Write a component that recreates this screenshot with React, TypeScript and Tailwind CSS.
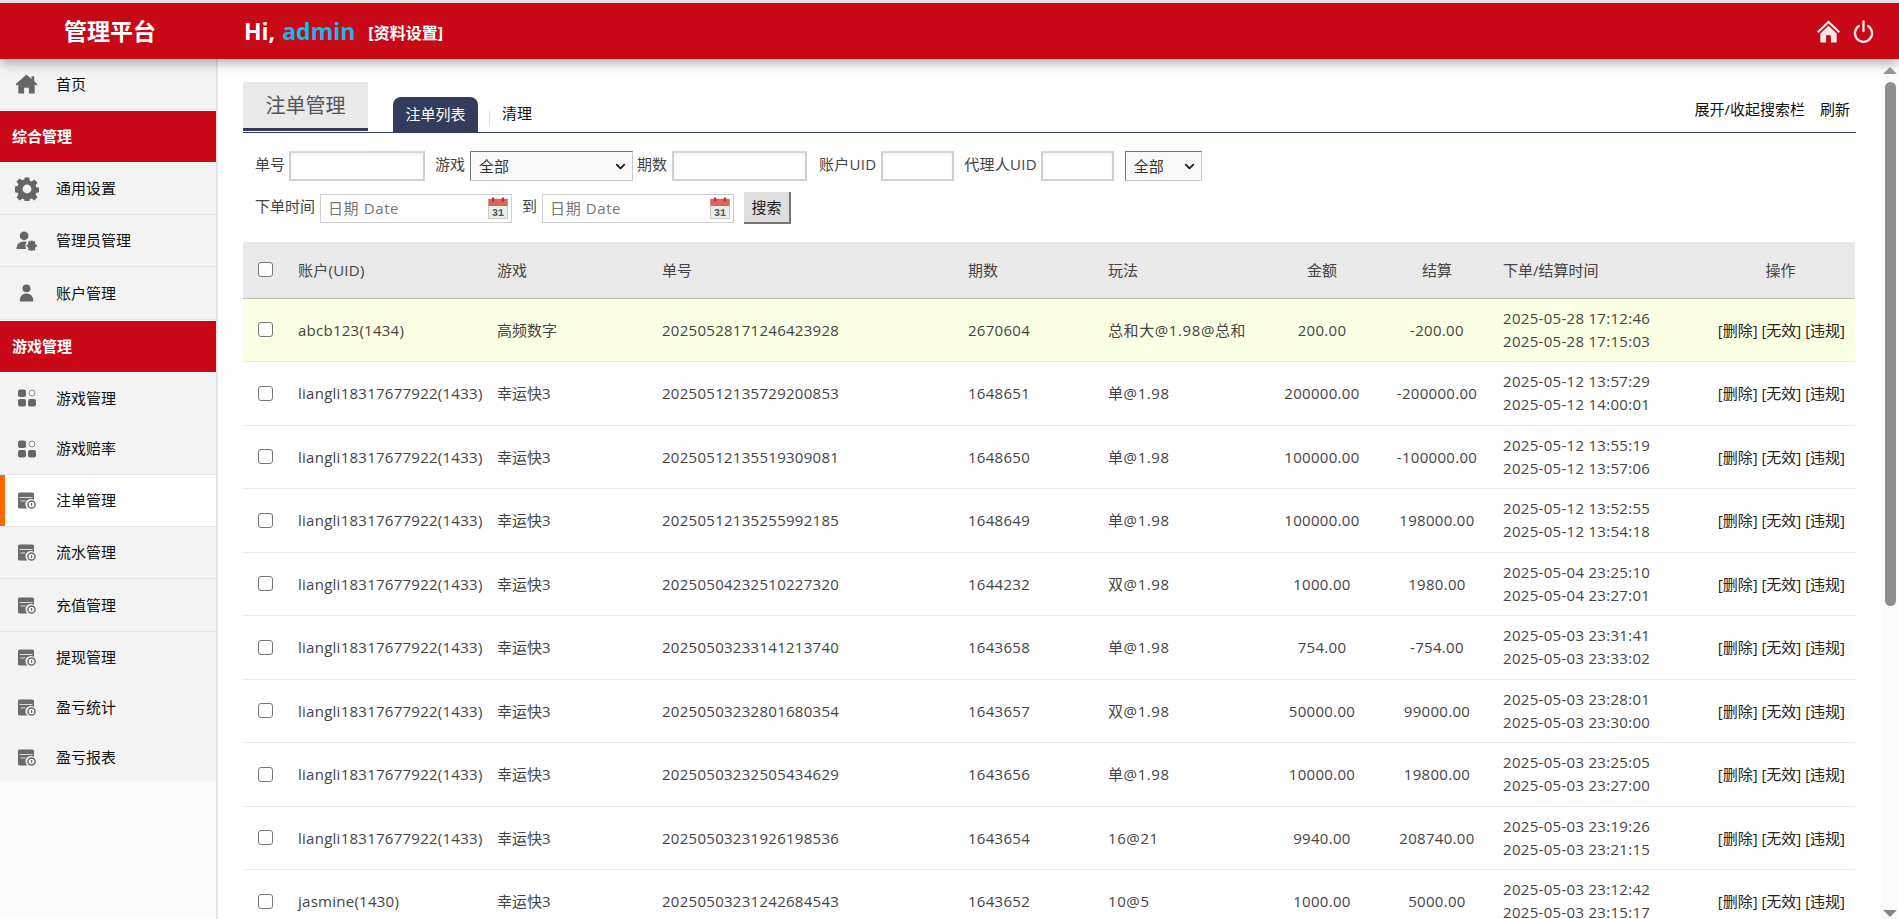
import React from 'react';
import { ChevronDown } from 'lucide-react';

const FONT = "font-['Open_Sans','Noto_Sans_CJK_SC',sans-serif]";

const HomeIcon = ({ className }: { className: string }) => (
  <svg viewBox="0 0 24 22" className={className} fill="currentColor">
    <path d="M12 0.5 L17.5 5.4 V2.5 H20.5 V8 L24 11.2 L22.6 12.8 L21 11.4 V21.5 H14.6 V15 H9.4 V21.5 H3 V11.4 L1.4 12.8 L0 11.2 Z" />
  </svg>
);

const HeaderHomeIcon = () => (
  <svg viewBox="0 0 24 24" className="w-[23px] h-[23px] text-[#fbe9e9]" fill="currentColor">
    <path d="M12 0.5 L24 12 L22.5 13.6 L12 3.6 L1.5 13.6 L0 12 Z" />
    <path d="M12 6 L20.5 14 V23.5 H14.5 V16 H9.5 V23.5 H3.5 V14 Z" />
  </svg>
);

const GearIcon = () => (
  <svg viewBox="0 0 24 24" className="w-[24px] h-[24px] text-[#666]" fill="currentColor">
    <path
      fillRule="evenodd"
      d="M9.8 0.5h4.4l.6 3.2 1.9.8 2.7-1.9 3.1 3.1-1.9 2.7.8 1.9 3.1.6v4.2l-3.1.6-.8 1.9 1.9 2.7-3.1 3.1-2.7-1.9-1.9.8-.6 3.1H9.8l-.6-3.1-1.9-.8-2.7 1.9-3.1-3.1 1.9-2.7-.8-1.9-3.1-.6V9.7l3.1-.6.8-1.9-1.9-2.7 3.1-3.1 2.7 1.9 1.9-.8zM12 7.6a4.4 4.4 0 1 0 0 8.8 4.4 4.4 0 0 0 0-8.8z"
    />
  </svg>
);

const AdminIcon = () => (
  <svg viewBox="0 0 22 21" className="w-[21px] h-[20px] text-[#666]" fill="currentColor">
    <circle cx="8.5" cy="5" r="4.6" />
    <path d="M0.5 19 C0.5 14 3.5 11 8.5 11 C9.6 11 10.6 11.2 11.4 11.5 C10 13 9.6 15.2 10 16.8 L10.8 19 Z" />
    <circle cx="16.5" cy="15.5" r="4.2" />
    <path d="M15.4 10h2.2v2h-2.2zM15.4 19h2.2v2h-2.2zM11 14.4h2v2.2h-2zM20 14.4h2v2.2h-2z" />
    <path d="M12.4 11.6l1.6-1.4 1.4 1.6-1.6 1.4zM17.6 11.8l1.4-1.6 1.6 1.4-1.4 1.6zM12.4 19.4l1.4-1.6 1.6 1.4-1.4 1.6zM17.6 19.2l1.4-1.4 1.6 1.6-1.4 1.4z" />
  </svg>
);

const UserIcon = () => (
  <svg viewBox="0 0 15 19" className="w-[15px] h-[18px] text-[#666]" fill="currentColor">
    <circle cx="7.5" cy="4.6" r="4.2" />
    <path d="M0.3 18.5 C0.3 13 3 10 7.5 10 C12 10 14.7 13 14.7 18.5 Z" />
  </svg>
);

const AppsIcon = () => (
  <svg viewBox="0 0 18 18" className="w-[18px] h-[18px] text-[#666]" fill="currentColor">
    <rect x="0" y="0.5" width="8" height="7.5" rx="2" />
    <circle cx="14" cy="4" r="3" fill="none" stroke="currentColor" strokeWidth="1" opacity="0.7" />
    <rect x="0" y="10" width="8" height="7.5" rx="2" />
    <rect x="10" y="10" width="8" height="7.5" rx="2" />
  </svg>
);

const LedgerIcon = () => (
  <svg viewBox="0 0 18 17" className="w-[18px] h-[17px] text-[#6b6b6b]" fill="currentColor">
    <path d="M1.5 0.5 H14.5 A1.5 1.5 0 0 1 16 2 V8 A5 5 0 0 0 9.5 16.5 H1.5 A1.5 1.5 0 0 1 0 15 V2 A1.5 1.5 0 0 1 1.5 0.5 Z" />
    <rect x="1.5" y="5" width="13" height="0.9" fill="#e8e8e8" />
    <rect x="2.5" y="8.5" width="5" height="0.9" fill="#e8e8e8" />
    <circle cx="13.5" cy="12.5" r="3.6" fill="none" stroke="currentColor" strokeWidth="1.5" />
    <rect x="13" y="11" width="1.2" height="3" />
  </svg>
);

const PowerIcon = () => (
  <svg viewBox="0 0 22 24" className="w-[21px] h-[23px] text-[#fbe9e9]" fill="none" stroke="currentColor" strokeWidth="2.4" strokeLinecap="round">
    <path d="M6.2 6.2 A9 9 0 1 0 15.8 6.2" />
    <path d="M11 1.5 V11.5" />
  </svg>
);

const CalendarIcon = () => (
  <svg viewBox="0 0 20 22" className="w-[20px] h-[22px]">
    <rect x="0.5" y="2" width="19" height="19.5" fill="#e9eeea" stroke="#b5b5b5" strokeWidth="0.7" />
    <rect x="0.5" y="2" width="19" height="7" fill="#e0605a" />
    <rect x="4" y="0.5" width="2.2" height="4" fill="#a33" />
    <rect x="13.8" y="0.5" width="2.2" height="4" fill="#a33" />
    <text x="10" y="19" textAnchor="middle" fontSize="10" fontWeight="700" fill="#4a5a5a" fontFamily="Liberation Mono, monospace">31</text>
  </svg>
);

interface MenuRow {
  label: string;
  icon?: React.ReactNode;
  kind?: 'head' | 'active';
  h: string;
  line?: boolean;
}

const homeIcon = <HomeIcon className="w-[23px] h-[20px] text-[#666]" />;

const menu: MenuRow[] = [
  { label: '首页', icon: homeIcon, h: 'h-[51px]', line: true },
  { label: '综合管理', kind: 'head', h: 'h-[51px]' },
  { label: '通用设置', icon: <GearIcon />, h: 'h-[52px]', line: true },
  { label: '管理员管理', icon: <AdminIcon />, h: 'h-[52px]', line: true },
  { label: '账户管理', icon: <UserIcon />, h: 'h-[53px]', line: true },
  { label: '游戏管理', kind: 'head', h: 'h-[51px]' },
  { label: '游戏管理', icon: <AppsIcon />, h: 'h-[50px]' },
  { label: '游戏赔率', icon: <AppsIcon />, h: 'h-[52px]', line: true },
  { label: '注单管理', icon: <LedgerIcon />, kind: 'active', h: 'h-[52px]', line: true },
  { label: '流水管理', icon: <LedgerIcon />, h: 'h-[52px]', line: true },
  { label: '充值管理', icon: <LedgerIcon />, h: 'h-[53px]', line: true },
  { label: '提现管理', icon: <LedgerIcon />, h: 'h-[50px]' },
  { label: '盈亏统计', icon: <LedgerIcon />, h: 'h-[50px]' },
  { label: '盈亏报表', icon: <LedgerIcon />, h: 'h-[50px]' },
];

const orders = [
  ['abcb123(1434)', '高频数字', '20250528171246423928', '2670604', '总和大@1.98@总和', '200.00', '-200.00', '2025-05-28 17:12:46', '2025-05-28 17:15:03'],
  ['liangli18317677922(1433)', '幸运快3', '20250512135729200853', '1648651', '单@1.98', '200000.00', '-200000.00', '2025-05-12 13:57:29', '2025-05-12 14:00:01'],
  ['liangli18317677922(1433)', '幸运快3', '20250512135519309081', '1648650', '单@1.98', '100000.00', '-100000.00', '2025-05-12 13:55:19', '2025-05-12 13:57:06'],
  ['liangli18317677922(1433)', '幸运快3', '20250512135255992185', '1648649', '单@1.98', '100000.00', '198000.00', '2025-05-12 13:52:55', '2025-05-12 13:54:18'],
  ['liangli18317677922(1433)', '幸运快3', '20250504232510227320', '1644232', '双@1.98', '1000.00', '1980.00', '2025-05-04 23:25:10', '2025-05-04 23:27:01'],
  ['liangli18317677922(1433)', '幸运快3', '20250503233141213740', '1643658', '单@1.98', '754.00', '-754.00', '2025-05-03 23:31:41', '2025-05-03 23:33:02'],
  ['liangli18317677922(1433)', '幸运快3', '20250503232801680354', '1643657', '双@1.98', '50000.00', '99000.00', '2025-05-03 23:28:01', '2025-05-03 23:30:00'],
  ['liangli18317677922(1433)', '幸运快3', '20250503232505434629', '1643656', '单@1.98', '10000.00', '19800.00', '2025-05-03 23:25:05', '2025-05-03 23:27:00'],
  ['liangli18317677922(1433)', '幸运快3', '20250503231926198536', '1643654', '16@21', '9940.00', '208740.00', '2025-05-03 23:19:26', '2025-05-03 23:21:15'],
  ['jasmine(1430)', '幸运快3', '20250503231242684543', '1643652', '10@5', '1000.00', '5000.00', '2025-05-03 23:12:42', '2025-05-03 23:15:17'],
];

const Checkbox = () => (
  <span className="block w-[15px] h-[15px] rounded-[3px] border border-[#767676] bg-white" />
);

const TextBox = ({ width }: { width: string }) => (
  <input type="text" className={`${width} h-[30px] border-2 border-[#d0d0d0] border-t-[#d8d8d8] bg-white shadow-[inset_0_2px_3px_rgba(0,0,0,0.06)] outline-none`} />
);

const SelectBox = ({ width, value }: { width: string; value: string }) => (
  <div className={`${width} h-[30px] flex items-center justify-between pl-[8px] pr-[4px] bg-[#f9f9f9] border border-[#c8c8c8] border-t-[#777] border-l-[#777] text-[15px] text-[#333]`}>
    <span>{value}</span>
    <ChevronDown className="w-[15px] h-[15px] text-[#222]" strokeWidth={3} />
  </div>
);

const DateBox = () => (
  <div className="w-[192px] h-[29px] flex items-center justify-between pl-[7px] pr-[3px] border border-[#cfcfcf] bg-white text-[15px] text-[#777]">
    <span className="tracking-[0.6px]">日期 Date</span>
    <CalendarIcon />
  </div>
);

const App: React.FC = () => {
  return (
    <div className={`${FONT} w-[1899px] h-[919px] overflow-hidden flex flex-col bg-white text-[15px] text-[#333]`}>
      {/* Top bar */}
      <div className="h-[3px] bg-[#e6e6e6] shrink-0" />
      <header className="relative z-10 h-[56px] shrink-0 flex items-center bg-[#c90817] text-white shadow-[0_5px_10px_rgba(0,0,0,0.28)]">
        <div className="w-[218px] pl-[64px] text-[23px] font-bold">管理平台</div>
        <div className="pl-[26px] flex items-center">
          <span className="text-[23px] font-bold">Hi,</span>
          <span className="text-[23px] font-bold text-[#14b9ee] ml-[7px]">admin</span>
          <span className="ml-[13px] mt-[3px] text-[16px] font-bold">[资料设置]</span>
        </div>
        <div className="ml-auto flex items-center gap-[13px] pr-[25px]">
          <HeaderHomeIcon />
          <PowerIcon />
        </div>
      </header>

      <div className="flex-1 flex min-h-0">
        {/* Sidebar */}
        <aside className="w-[218px] shrink-0 bg-[#fafafa] border-r-2 border-[#dde3ea]">
          {menu.map((item, i) =>
            item.kind === 'head' ? (
              <div key={i} className={`${item.h} mb-[1px] mt-[1px] flex items-center pl-[12px] bg-[#c90817] text-white font-bold`}>
                {item.label}
              </div>
            ) : (
              <div
                key={i}
                className={`${item.h} flex items-center relative text-[#111] ${item.kind === 'active' ? 'bg-white' : 'bg-[#f3f3f3]'} ${item.line ? 'border-b border-[#e4e4e4]' : ''}`}
              >
                {item.kind === 'active' && <span className="absolute left-0 top-0 bottom-0 w-[5px] bg-[#ff6a00]" />}
                <span className="w-[56px] flex justify-center pr-[3px]">{item.icon}</span>
                {item.label}
              </div>
            ),
          )}
        </aside>

        {/* Main */}
        <main className="flex-1 min-w-0 overflow-hidden pl-[25px] pt-[23px]">
          <div className="w-[1613px]">
            <div className="flex items-end h-[51px] border-b border-[#2f3a5c]">
              <div className="w-[125px] h-[49px] mb-[1px] pt-[2px] flex items-center justify-center bg-[#e9e9e9] border-b-[3px] border-[#333c5c] text-[20px] text-[#555]">
                注单管理
              </div>
              <div className="ml-[25px] w-[85px] h-[35px] flex items-center justify-center rounded-t-[8px] bg-[#333c5c] text-white">
                注单列表
              </div>
              <span className="ml-[11px] mb-[5px] w-[1px] h-[16px] bg-[#ddd]" />
              <span className="ml-[12px] mb-[8px] text-[#111]">清理</span>
              <div className="ml-auto mb-[12px] flex gap-[15px] pr-[6px] text-[#111]">
                <span>展开/收起搜索栏</span>
                <span>刷新</span>
              </div>
            </div>

            {/* Search */}
            <div className="pl-[12px] pt-[18px] h-[109px] text-[#444]">
              <div className="flex items-center h-[30px]">
                <span className="-mt-[3px]">单号</span>
                <span className="ml-[4px]"><TextBox width="w-[136px]" /></span>
                <span className="ml-[10px] -mt-[3px]">游戏</span>
                <span className="ml-[5px]"><SelectBox width="w-[163px]" value="全部" /></span>
                <span className="ml-[4px] -mt-[3px]">期数</span>
                <span className="ml-[5px]"><TextBox width="w-[135px]" /></span>
                <span className="ml-[12px] -mt-[3px] tracking-[0.25px]">账户UID</span>
                <span className="ml-[5px]"><TextBox width="w-[73px]" /></span>
                <span className="ml-[10px] -mt-[3px] tracking-[0.25px]">代理人UID</span>
                <span className="ml-[4px]"><TextBox width="w-[73px]" /></span>
                <span className="ml-[11px]"><SelectBox width="w-[77px]" value="全部" /></span>
              </div>
              <div className="flex items-center h-[32px] mt-[11px]">
                <span className="-mt-[3px]">下单时间</span>
                <span className="ml-[5px]"><DateBox /></span>
                <span className="ml-[10px] -mt-[3px]">到</span>
                <span className="ml-[5px]"><DateBox /></span>
                <button className="ml-[10px] w-[47px] h-[32px] bg-[#dedede] border-r-2 border-b-2 border-[#777] text-[#222]">搜索</button>
              </div>
            </div>

            {/* Orders table */}
            <table className="w-[1612px] table-fixed border-collapse text-[#444]">
              <colgroup>
                <col className="w-[55px]" />
                <col className="w-[199px]" />
                <col className="w-[165px]" />
                <col className="w-[306px]" />
                <col className="w-[140px]" />
                <col className="w-[152px]" />
                <col className="w-[124px]" />
                <col className="w-[106px]" />
                <col className="w-[216px]" />
                <col className="w-[149px]" />
              </colgroup>
              <thead>
                <tr className="h-[56px] bg-[#e9e9e9] border-b border-[#bdbdbd] font-normal">
                  <th className="pl-[15px] font-normal"><Checkbox /></th>
                  <th className="text-left font-normal tracking-[0.25px]">账户(UID)</th>
                  <th className="text-left font-normal">游戏</th>
                  <th className="text-left font-normal">单号</th>
                  <th className="text-left font-normal">期数</th>
                  <th className="text-left font-normal">玩法</th>
                  <th className="text-center font-normal">金额</th>
                  <th className="text-center font-normal">结算</th>
                  <th className="text-left pl-[13px] font-normal">下单/结算时间</th>
                  <th className="text-center font-normal">操作</th>
                </tr>
              </thead>
              <tbody>
                {orders.map((row, i) => (
                  <tr key={i} className={`h-[63.5px] border-b border-[#ececec] ${i === 0 ? 'bg-[#fbffe4]' : 'bg-white'}`}>
                    <td className="pl-[15px]"><Checkbox /></td>
                    <td className="whitespace-nowrap tracking-[0.26px]">{row[0]}</td>
                    <td>{row[1]}</td>
                    <td className="tracking-[0.28px]">{row[2]}</td>
                    <td className="tracking-[0.28px]">{row[3]}</td>
                    <td className="whitespace-nowrap tracking-[0.6px]">{row[4]}</td>
                    <td className="text-center tracking-[0.3px]">{row[5]}</td>
                    <td className="text-center tracking-[0.3px]">{row[6]}</td>
                    <td className="pl-[13px] leading-[23px] whitespace-nowrap tracking-[0.3px]">
                      {row[7]}
                      <br />
                      {row[8]}
                    </td>
                    <td className="text-right pr-[10px] text-[#222] whitespace-nowrap">[删除] [无效] [违规]</td>
                  </tr>
                ))}
              </tbody>
            </table>
          </div>
        </main>

        {/* Page scrollbar */}
        <div className="w-[18px] shrink-0 bg-[#fbfbfb] flex flex-col items-center pt-[8px] pb-[2px]">
          <span className="w-0 h-0 border-x-[7px] border-x-transparent border-b-[7px] border-b-[#999]" />
          <span className="mt-[8px] w-[11px] h-[524px] rounded-full bg-[#8e8e8e]" />
          <span className="mt-auto w-0 h-0 border-x-[7px] border-x-transparent border-t-[7px] border-t-[#888]" />
        </div>
      </div>
    </div>
  );
};

export default App;
